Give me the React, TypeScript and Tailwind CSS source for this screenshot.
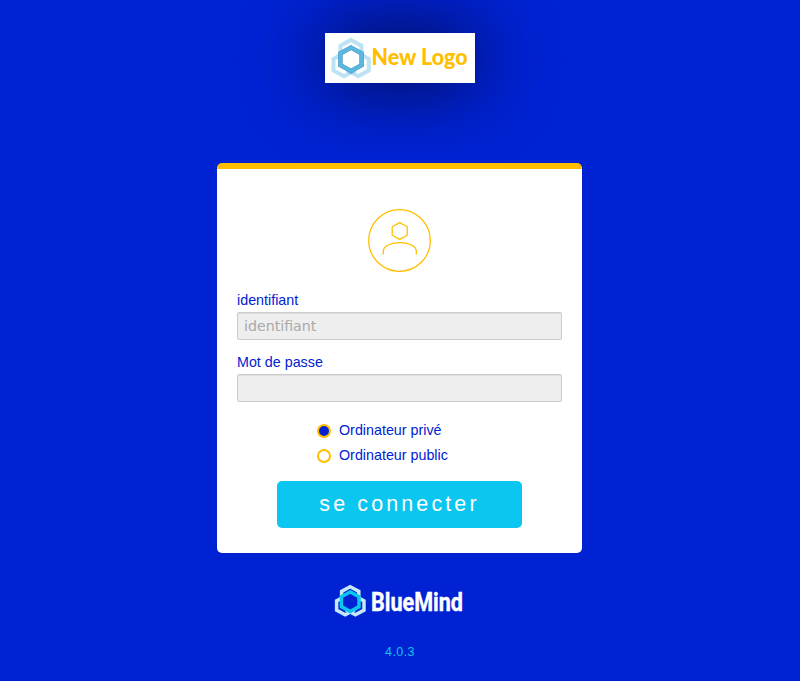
import { useState } from "react";

// Pointy-top hexagon outline around (cx, cy); w and h are the half width and half height.
function hex(cx: number, cy: number, w: number, h: number) {
  return `M${cx} ${cy - h}L${cx + w} ${cy - h / 2}V${cy + h / 2}L${cx} ${cy + h}L${cx - w} ${cy + h / 2}V${cy - h / 2}Z`;
}

function CustomLogo() {
  return (
    <svg width="150" height="50" viewBox="0 0 150 50" className="block bg-white shadow-[0_0_75px_rgba(0,0,0,0.75)]">
      <g fill="none" strokeWidth="4" stroke="#5ab7e0">
        <g strokeOpacity="0.4">
          <path d={hex(26, 18.5, 10.5, 11.6)} />
          <path d={hex(19, 31.7, 10.5, 11.6)} />
          <path d={hex(33.3, 31.7, 10.5, 11.6)} />
        </g>
        <path d={hex(26, 26.3, 10.6, 11.7)} stroke="#4e93b5" strokeWidth="4.5" fill="#fff" />
        <path d={hex(26, 26.2, 10.6, 11.7)} strokeWidth="3.8" />
      </g>
      <text x="46.5" y="31.6" textLength="96" lengthAdjust="spacingAndGlyphs" fill="#ffbf00" className="font-['Lato',sans-serif] text-[22px] font-black">
        New Logo
      </text>
    </svg>
  );
}

function BlueMindLogo() {
  return (
    <svg width="134" height="34" viewBox="332 584 134 34" className="block overflow-visible">
      <g fill="none" strokeWidth="3.5">
        <g stroke="#c3e8f8">
          <path d={hex(350.2, 596, 8.6, 9.2)} />
          <path d={hex(345.2, 605.5, 8.6, 9.2)} />
          <path d={hex(355.4, 605.5, 8.6, 9.2)} />
        </g>
        <path d={hex(350.2, 601.7, 8.8, 9.8)} stroke="#0bc6ef" fill="#0022d3" />
      </g>
      <text x="371" y="611" textLength="92" lengthAdjust="spacingAndGlyphs" fill="#fff" stroke="#fff" strokeWidth="0.4" className="font-['Roboto',sans-serif] text-[25px] font-bold">
        BlueMind
      </text>
    </svg>
  );
}

function Radio({ label, checked, onChange }: { label: string; checked: boolean; onChange: () => void }) {
  return (
    <label className="flex h-[25px] items-center gap-2">
      <input
        type="radio"
        name="priv"
        checked={checked}
        onChange={onChange}
        className="relative top-px size-3.5 appearance-none rounded-full border-2 border-[#ffbf00] bg-white checked:bg-[#0022d3]"
      />
      <span className="pt-px leading-5">{label}</span>
    </label>
  );
}

const field =
  "block h-7 w-full rounded-[2px] border border-[#ccc] bg-[#eee] px-1.5 font-['DejaVu_Sans',sans-serif] text-[14.2px] shadow-[inset_0_1px_1px_#ddd] outline-none placeholder:text-[#a9a9a9]";

export default function App() {
  const [isPrivate, setPrivate] = useState(true);
  return (
    <div className="flex h-[681px] w-full flex-col items-center overflow-hidden bg-[#0022d3] pt-[33px] font-['Liberation_Sans',sans-serif] text-[14.3px] text-[#0022d3]">
      <CustomLogo />
      <form className="mt-20 mr-px h-[390px] w-[365px] rounded-[5px] border-t-6 border-[#ffbf00] bg-white px-5 pt-10">
        <svg width="63" height="63" viewBox="0 0 63 63" fill="none" stroke="#ffbf00" strokeWidth="1.3" className="mx-auto block">
          <circle cx="31.5" cy="31.5" r="30.8" />
          <path d={hex(31.7, 22, 7.5, 8.4)} />
          <path d="M15.3 45.5V42C15.3 37 23 33.7 31.8 33.7S48.3 37 48.3 42V45.5" />
        </svg>
        <label className="mt-[18px] block h-[22px] leading-5">identifiant</label>
        <input className={field} placeholder="identifiant" />
        <label className="mt-3 block h-[22px] leading-5">Mot de passe</label>
        <input type="password" className={field} />
        <div className="mt-[15px] ml-20">
          <Radio label="Ordinateur privé" checked={isPrivate} onChange={() => setPrivate(true)} />
          <Radio label="Ordinateur public" checked={!isPrivate} onChange={() => setPrivate(false)} />
        </div>
        <button type="button" className="mx-auto mt-3.5 block h-[47px] w-[245px] rounded-[5px] bg-[#0bc6ef] text-[21.5px] tracking-[3.1px] text-white">
          se connecter
        </button>
      </form>
      <div className="mt-[31px] mr-0.5">
        <BlueMindLogo />
      </div>
      <div className="mt-[26px] text-[12.5px] leading-4 tracking-[0.4px] text-[#0bc6ef]">4.0.3</div>
    </div>
  );
}
